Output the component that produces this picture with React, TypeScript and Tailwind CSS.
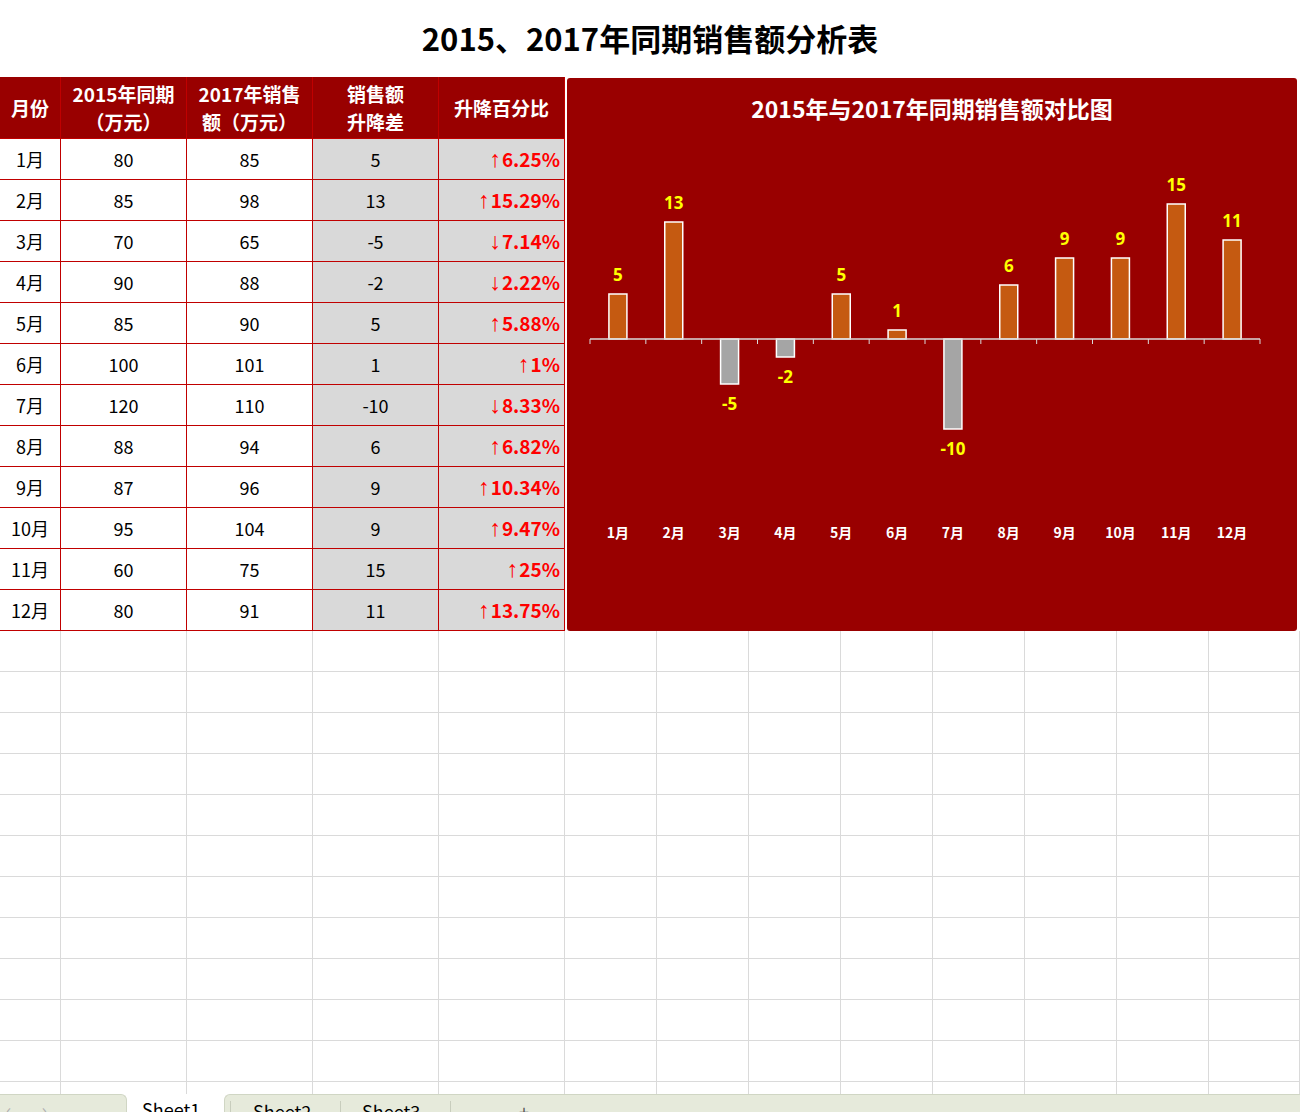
import React from "react";

const months = ["1月", "2月", "3月", "4月", "5月", "6月", "7月", "8月", "9月", "10月", "11月", "12月"];
const sales2015 = [80, 85, 70, 90, 85, 100, 120, 88, 87, 95, 60, 80];
const sales2017 = [85, 98, 65, 88, 90, 101, 110, 94, 96, 104, 75, 91];
const percents = ["6.25%", "15.29%", "7.14%", "2.22%", "5.88%", "1%", "8.33%", "6.82%", "10.34%", "9.47%", "25%", "13.75%"];

const rows = months.map((m, i) => ({
  month: m,
  a: sales2015[i],
  b: sales2017[i],
  diff: sales2017[i] - sales2015[i],
  pct: percents[i],
}));

const cjk = "font-['Noto_Sans_CJK_SC','Noto_Sans',sans-serif]";

const SalesTable = () => {
  const head = "bg-[#990000] text-white font-bold text-[19px] leading-[28px] flex items-center justify-center text-center border-r border-b border-[#c00000]";
  const cell = "h-[41px] flex items-center border-r border-b border-[#c00000]";
  const plain = `${cell} justify-center text-[18px] text-black`;

  return (
    <div className={`grid grid-cols-[61px_126px_126px_126px_126px] w-[565px] ${cjk}`}>
      <div className={`${head} h-[62px]`}>月份</div>
      <div className={head}>
        2015年同期
        <br />
        （万元）
      </div>
      <div className={head}>
        2017年销售
        <br />
        额（万元）
      </div>
      <div className={head}>
        销售额
        <br />
        升降差
      </div>
      <div className={head}>升降百分比</div>

      {rows.map((r) => (
        <React.Fragment key={r.month}>
          <div className={`${plain} bg-white`}>{r.month}</div>
          <div className={`${plain} bg-white`}>{r.a}</div>
          <div className={`${plain} bg-white`}>{r.b}</div>
          <div className={`${plain} bg-[#d9d9d9]`}>{r.diff}</div>
          <div className={`${cell} bg-[#d9d9d9] justify-end pr-[4px] text-[#ff0000] font-bold text-[19px]`}>
            <span className="font-['Liberation_Sans',sans-serif] font-normal text-[23px] leading-[23px] mr-[1px]">
              {r.diff >= 0 ? "↑" : "↓"}
            </span>
            {r.pct}
          </div>
        </React.Fragment>
      ))}
    </div>
  );
};

const CompareChart = () => {
  const left = 23;
  const right = 693;
  const axisY = 261;
  const unit = 9;
  const step = (right - left) / 12;

  return (
    <div className={`w-[730px] h-[553px] bg-[#990000] rounded-[3px] flex flex-col ${cjk}`}>
      <div className="h-[60px] flex items-center justify-center text-white font-bold text-[23px]">
        2015年与2017年同期销售额对比图
      </div>
      <svg width="730" height="493" viewBox="0 60 730 493">
        {rows.map((r, i) => {
          const cx = left + step * (i + 0.5);
          const h = Math.abs(r.diff) * unit;
          const up = r.diff >= 0;
          return (
            <g key={r.month}>
              <rect
                x={cx - 9}
                y={up ? axisY - h : axisY}
                width={18}
                height={h}
                fill={up ? "#c55a11" : "#a5a5a5"}
                stroke="#ffffff"
                strokeWidth={1.5}
              />
              <text
                x={cx}
                y={up ? axisY - h - 20 : axisY + h + 19}
                textAnchor="middle"
                dominantBaseline="central"
                fill="#ffff00"
                fontWeight="bold"
                fontSize="17"
                fontFamily="'Noto Sans', sans-serif"
              >
                {r.diff}
              </text>
              <text
                x={cx}
                y={454}
                textAnchor="middle"
                dominantBaseline="central"
                fill="#ffffff"
                fontWeight="bold"
                fontSize="14"
                fontFamily="'Noto Sans CJK SC', sans-serif"
              >
                {r.month}
              </text>
            </g>
          );
        })}
        <line x1={left} y1={axisY} x2={right} y2={axisY} stroke="#d9d9d9" strokeWidth={1.5} />
        {Array.from({ length: 13 }).map((_, k) => (
          <line
            key={k}
            x1={left + step * k}
            y1={axisY}
            x2={left + step * k}
            y2={axisY + 5}
            stroke="#d9d9d9"
            strokeWidth={1}
          />
        ))}
      </svg>
    </div>
  );
};

const EmptyGrid = () => {
  const cols = 13;
  const heights = [41, 41, 41, 41, 41, 41, 41, 41, 41, 41, 41, 12];
  return (
    <div className="grid grid-cols-[61px_126px_126px_126px_126px_92px_92px_92px_92px_92px_92px_92px_1fr]">
      {heights.map((h, ri) =>
        Array.from({ length: cols }).map((_, ci) => (
          <div
            key={`${ri}-${ci}`}
            className={`border-r border-[#dadada] ${h === 41 ? "h-[41px] border-b" : "h-[12px]"}`}
          />
        ))
      )}
    </div>
  );
};

const SheetTabs = () => (
  <div className={`h-[18px] flex overflow-hidden ${cjk} text-[18px] leading-[22px]`}>
    <div className="w-[127px] bg-[#e6eadb] border-t border-r border-[#d0d6c4] rounded-tr-[6px] flex items-start pt-[3px] pl-[6px] gap-[30px] text-[#b0b0b0]">
      <span>‹</span>
      <span>›</span>
    </div>
    <div className="w-[97px] bg-white pl-[15px] pt-[4px] text-black">Sheet1</div>
    <div className="flex-1 bg-[#e6eadb] border-t border-l border-[#d0d6c4] rounded-tl-[6px] flex items-start text-black">
      <div className="w-[110px] border-l border-[#c8cdbd] ml-[5px] mt-[6px] pl-[22px] h-[20px] leading-[20px]">Sheet2</div>
      <div className="w-[110px] border-l border-[#c8cdbd] mt-[6px] pl-[21px] h-[20px] leading-[20px]">Sheet3</div>
      <div className="w-[110px] border-l border-[#c8cdbd] mt-[6px] pl-[68px] h-[20px] leading-[20px] text-[#555]">+</div>
    </div>
  </div>
);

export default function App() {
  return (
    <div className="w-[1300px] h-[1112px] bg-white overflow-hidden flex flex-col">
      <div className={`h-[77px] shrink-0 flex items-center justify-center text-[31px] font-bold text-black ${cjk}`}>
        2015、2017年同期销售额分析表
      </div>
      <div className="flex shrink-0">
        <SalesTable />
        <div className="ml-[2px] mt-[1px]">
          <CompareChart />
        </div>
      </div>
      <EmptyGrid />
      <SheetTabs />
    </div>
  );
}
